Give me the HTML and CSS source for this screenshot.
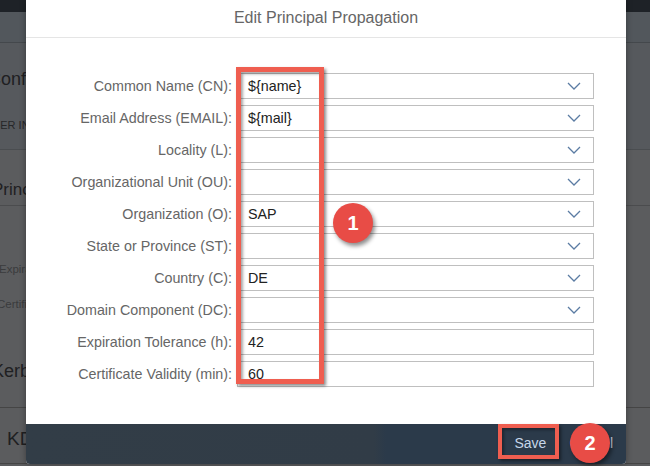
FILE: index.html
```html
<!DOCTYPE html>
<html>
<head>
<meta charset="utf-8">
<link rel="stylesheet" href="styles.css">
</head>
<body>
<div class="page">
  <div class="topbar"></div>
  <div class="band"></div>
  <div class="blk blk-title"><span class="t-big">Configuration</span></div>
  <div class="blk blk-tabs"><span class="t-tab">USER INFORMATION</span></div>
  <div class="blk blk-princ"><span class="t-sec t-princ">Principal Propagation</span></div>
  <div class="blk blk-fields">
    <span class="t-field t-exp">Expiration Tolerance</span>
    <span class="t-field t-cert">Certificate Validity</span>
    <span class="t-sec t-kerb">Kerberos</span>
  </div>
  <div class="blk blk-kd"><span class="t-sec t-kd">KDC</span></div>
</div>

<div class="dialog">
  <div class="dlg-header">Edit Principal Propagation</div>
  <div class="dlg-body">
    <div class="form">
      <label class="lbl">Common Name (CN):</label>
      <div class="field combo"><span class="val">${name}</span><svg class="chev" width="14" height="8" viewBox="0 0 14 8"><polyline points="1,1 7,7 13,1"/></svg></div>
      <label class="lbl">Email Address (EMAIL):</label>
      <div class="field combo"><span class="val">${mail}</span><svg class="chev" width="14" height="8" viewBox="0 0 14 8"><polyline points="1,1 7,7 13,1"/></svg></div>
      <label class="lbl">Locality (L):</label>
      <div class="field combo"><span class="val"></span><svg class="chev" width="14" height="8" viewBox="0 0 14 8"><polyline points="1,1 7,7 13,1"/></svg></div>
      <label class="lbl">Organizational Unit (OU):</label>
      <div class="field combo"><span class="val"></span><svg class="chev" width="14" height="8" viewBox="0 0 14 8"><polyline points="1,1 7,7 13,1"/></svg></div>
      <label class="lbl">Organization (O):</label>
      <div class="field combo"><span class="val">SAP</span><svg class="chev" width="14" height="8" viewBox="0 0 14 8"><polyline points="1,1 7,7 13,1"/></svg></div>
      <label class="lbl">State or Province (ST):</label>
      <div class="field combo"><span class="val"></span><svg class="chev" width="14" height="8" viewBox="0 0 14 8"><polyline points="1,1 7,7 13,1"/></svg></div>
      <label class="lbl">Country (C):</label>
      <div class="field combo"><span class="val">DE</span><svg class="chev" width="14" height="8" viewBox="0 0 14 8"><polyline points="1,1 7,7 13,1"/></svg></div>
      <label class="lbl">Domain Component (DC):</label>
      <div class="field combo"><span class="val"></span><svg class="chev" width="14" height="8" viewBox="0 0 14 8"><polyline points="1,1 7,7 13,1"/></svg></div>
      <label class="lbl">Expiration Tolerance (h):</label>
      <div class="field"><span class="val">42</span></div>
      <label class="lbl">Certificate Validity (min):</label>
      <div class="field"><span class="val">60</span></div>
    </div>
  </div>
  <div class="dlg-footer">
    <button class="btn">Save</button>
    <button class="btn btn-cancel">Cancel</button>
  </div>
</div>

<div class="hl hl-fields"></div>
<div class="hl hl-save"></div>
<div class="badge badge-1">1</div>
<div class="badge badge-2">2</div>
</body>
</html>
```

FILE: styles.css
```css
* { box-sizing: border-box; }
html, body { margin: 0; padding: 0; }
body {
  width: 650px;
  height: 466px;
  overflow: hidden;
  position: relative;
  font-family: "Liberation Sans", Arial, sans-serif;
  background: #5a5b5d;
}

/* dimmed background page */
.page {
  display: flex;
  flex-direction: column;
  height: 466px;
  background: #5b5c5e;
}
.topbar { height: 12px; background: #1e2227; flex: none; }
.band { height: 31px; background: #52575c; border-bottom: 1px solid #44484c; flex: none; }
.blk { position: relative; flex: none; overflow: hidden; white-space: nowrap; }
.blk-title { height: 64px; background: #56595d; padding-top: 26px; }
.blk-tabs { height: 43px; background: #56595d; border-bottom: 1px solid #4a4d50; padding-top: 12px; }
.blk-princ { height: 56px; border-bottom: 1px solid #4b4c4e; padding-top: 30px; }
.blk-fields { height: 202px; border-bottom: 1px solid #454545; }
.blk-kd { height: 56px; border-bottom: 1px solid #454545; padding-top: 20px; }

.t-big { display: block; font-size: 18px; color: #1f2022; margin-left: -12px; }
.t-tab { display: block; font-size: 11px; color: #262729; margin-left: -15px; }
.t-sec { display: block; font-size: 18px; color: #1f2022; }
.t-princ { margin-left: -8px; font-size: 17px; }
.t-field { position: absolute; left: -1px; font-size: 11.5px; color: #3a3b3d; }
.t-exp { top: 57px; }
.t-cert { top: 92px; left: -3px; }
.t-kerb { position: absolute; top: 155px; left: -8px; }
.t-kd { margin-left: 7px; font-size: 19px; }

/* dialog */
.dialog {
  position: absolute;
  left: 26px;
  top: 0;
  width: 600px;
  height: 464px;
  background: #fff;
  display: flex;
  flex-direction: column;
  border-radius: 0 0 4px 4px;
  box-shadow: 0 0 6px rgba(0,0,0,0.35);
}
.dlg-header {
  height: 38px;
  flex: none;
  border-bottom: 1px solid #e5e5e5;
  text-align: center;
  font-size: 16px;
  color: #666;
  line-height: 36px;
}
.dlg-body {
  flex: 1;
  padding: 35px 32px 0 0;
}
.form {
  display: grid;
  grid-template-columns: 206px 1fr;
  column-gap: 5px;
  row-gap: 6px;
}
.lbl {
  height: 26px;
  line-height: 26px;
  text-align: right;
  font-size: 14.3px;
  color: #666;
  white-space: nowrap;
}
.field {
  height: 26px;
  border: 1px solid #bfbfbf;
  display: flex;
  align-items: center;
  padding: 0 10px 0 10px;
  font-size: 14.3px;
  color: #222;
}
.val { flex: 1; }
.chev { flex: none; margin-right: 2px; }
.chev polyline { fill: none; stroke: #5b7ca3; stroke-width: 1.3; }

.dlg-footer {
  height: 40px;
  flex: none;
  background: linear-gradient(90deg, #323d47 0%, #313c47 58%, #2b3a4a 60%, #2b3a4a 100%);
  border-radius: 0 0 4px 4px;
  display: flex;
  justify-content: flex-end;
  align-items: center;
  padding-right: 13px;
  gap: 23px;
}
.btn {
  background: transparent;
  border: none;
  font-family: "Liberation Sans", Arial, sans-serif;
  font-size: 14px;
  color: #c6d6e9;
  padding: 0;
  margin-bottom: 2px;
}

/* annotation overlays */
.hl {
  position: absolute;
  border: 5px solid #ef5e50;
  box-shadow: 2px 2px 3px rgba(0,0,0,0.45), inset 2px 2px 3px rgba(0,0,0,0.35);
}
.hl-fields { left: 236px; top: 67px; width: 88px; height: 317px; }
.hl-save { left: 498px; top: 424px; width: 61px; height: 35px; border-width: 4px; }

.badge {
  position: absolute;
  width: 40px;
  height: 40px;
  border-radius: 50%;
  background: #e84c46;
  color: #fff;
  font-weight: bold;
  font-size: 20px;
  display: flex;
  align-items: center;
  justify-content: center;
  box-shadow: 2px 3px 4px rgba(0,0,0,0.45);
}
.badge-1 { left: 333px; top: 203px; }
.badge-2 { left: 570px; top: 423px; }
```
